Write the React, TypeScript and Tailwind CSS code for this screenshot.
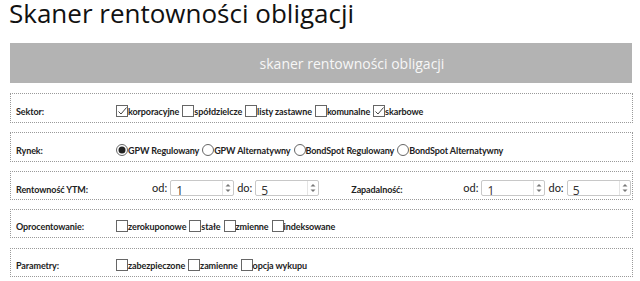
import React from "react";

const Check = ({ checked }: { checked?: boolean }) => (
  <svg width="12" height="12" viewBox="0 0 12 12" className="shrink-0">
    <rect x="0.5" y="0.5" width="11" height="11" fill="white" stroke="#666" strokeWidth="1" />
    {checked && <path d="M2.5 6.5 L5 9 L10.5 2.5" fill="none" stroke="#444" strokeWidth="1" />}
  </svg>
);

const Radio = ({ checked }: { checked?: boolean }) => (
  <svg width="12" height="12" viewBox="0 0 12 12" className="shrink-0">
    <circle cx="6" cy="6" r="5.5" fill="white" stroke="#666" strokeWidth="1" />
    {checked && <circle cx="6" cy="6" r="3.5" fill="#222" />}
  </svg>
);

const Spin = ({ value }: { value: string }) => (
  <div className="flex h-[16px] w-[64px] items-stretch rounded-[2px] border border-[#c8c8c8] bg-white">
    <span className="flex-1 pl-[5px] pt-[3px] text-[12px] leading-[14px] text-[#333] font-['Open_Sans',sans-serif]">
      {value}
    </span>
    <span className="flex w-[11px] flex-col items-center justify-center border-l border-[#e4e4e4]">
      <svg width="6" height="10" viewBox="0 0 6 10">
        <path d="M0.5 3.5 L3 1 L5.5 3.5 Z" fill="#777" />
        <path d="M0.5 6.5 L3 9 L5.5 6.5 Z" fill="#777" />
      </svg>
    </span>
  </div>
);

const Opt = ({ type, label, checked }: { type: "c" | "r"; label: string; checked?: boolean }) => (
  <span className="mr-[3px] flex items-end">
    {type === "c" ? <Check checked={checked} /> : <Radio checked={checked} />}
    <span className="leading-[11px]">{label}</span>
  </span>
);

const Row = ({ label, children, h = "h-[30px]" }: { label: string; children: React.ReactNode; h?: string }) => (
  <div className={`flex ${h} items-end border border-dotted border-[#9a9a9a] pb-[5px] pl-[5px]`}>
    <div className="w-[100px] shrink-0 leading-[11px]">{label}</div>
    <div className="flex items-end">{children}</div>
  </div>
);

export default function App() {
  return (
    <div className="h-[281px] w-[640px] overflow-hidden bg-white text-[#222]">
      <h1 className="h-[43px] pl-[9px] pt-[1px] text-[26px] leading-[25px] text-[#111] font-['Open_Sans',sans-serif]">
        Skaner rentowności obligacji
      </h1>
      <div className="ml-[10px] flex h-[40px] w-[622px] items-center justify-center bg-[#b3b3b3] pl-[62px] text-[14px] text-[#f7f7f7] font-['Open_Sans',sans-serif]">
        skaner rentowności obligacji
      </div>
      <div className="ml-[10px] mt-[10px] flex w-[623px] flex-col gap-[9px] text-[9px] tracking-[-0.1px] font-bold font-['Lato',sans-serif]">
        <Row label="Sektor:">
          <Opt type="c" label="korporacyjne" checked />
          <Opt type="c" label="spółdzielcze" />
          <Opt type="c" label="listy zastawne" />
          <Opt type="c" label="komunalne" />
          <Opt type="c" label="skarbowe" checked />
        </Row>
        <Row label="Rynek:">
          <Opt type="r" label="GPW Regulowany" checked />
          <Opt type="r" label="GPW Alternatywny" />
          <Opt type="r" label="BondSpot Regulowany" />
          <Opt type="r" label="BondSpot Alternatywny" />
        </Row>
        <div className="flex h-[29px] items-end border border-dotted border-[#9a9a9a] pb-[3px] pl-[5px]">
          <div className="w-[136px] shrink-0 pb-[1px] leading-[11px]">Rentowność YTM:</div>
          <div className="flex items-center gap-[3px] text-[11px] font-normal tracking-normal">
            <span>od:</span>
            <Spin value="1" />
            <span>do:</span>
            <Spin value="5" />
          </div>
          <div className="w-[144px] shrink-0 pb-[1px] pl-[32px] leading-[11px]">Zapadalność:</div>
          <div className="flex items-center gap-[3px] text-[11px] font-normal tracking-normal">
            <span>od:</span>
            <Spin value="1" />
            <span>do:</span>
            <Spin value="5" />
          </div>
        </div>
        <div className="flex flex-col gap-[10px]">
          <Row label="Oprocentowanie:" h="h-[29px]">
            <Opt type="c" label="zerokuponowe" />
            <Opt type="c" label="stałe" />
            <Opt type="c" label="zmienne" />
            <Opt type="c" label="indeksowane" />
          </Row>
          <Row label="Parametry:" h="h-[29px]">
            <Opt type="c" label="zabezpieczone" />
            <Opt type="c" label="zamienne" />
            <Opt type="c" label="opcja wykupu" />
          </Row>
        </div>
      </div>
    </div>
  );
}
